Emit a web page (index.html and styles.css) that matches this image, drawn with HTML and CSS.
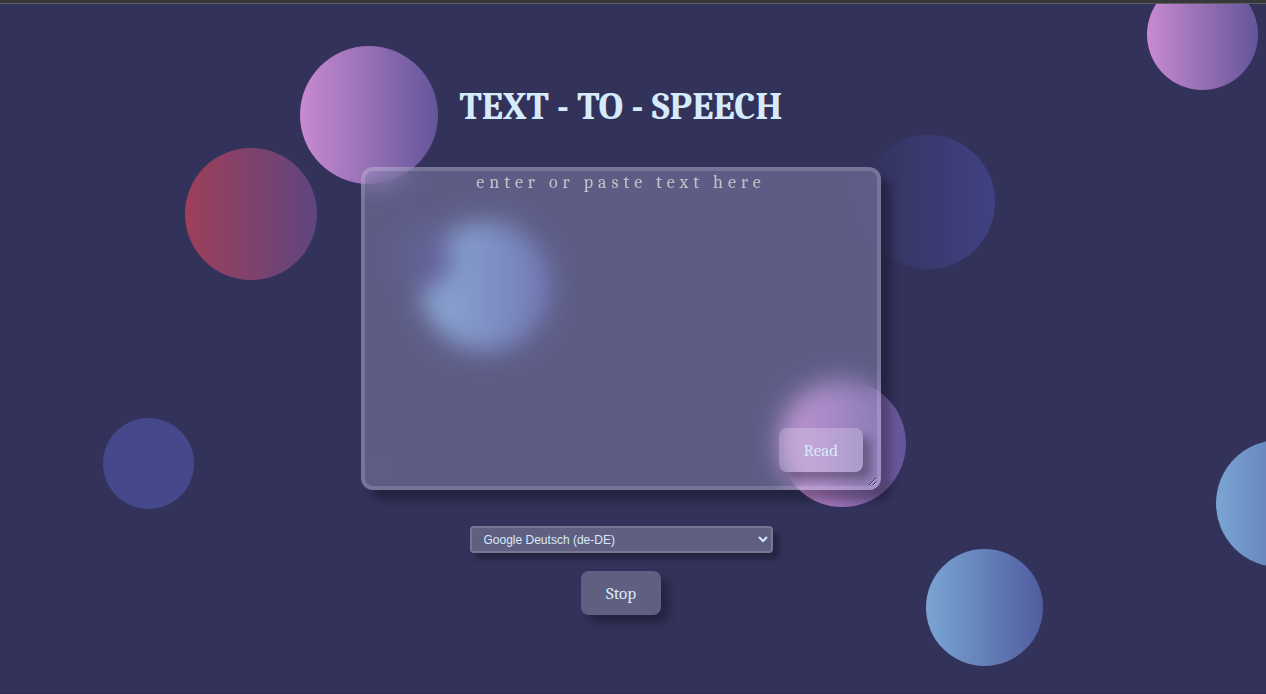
FILE: index.html
```html
<!DOCTYPE html>
<html lang="en">
<head>
<meta charset="utf-8">
<meta name="viewport" content="width=device-width, initial-scale=1">
<title>Text to Speech</title>
<link rel="stylesheet" href="styles.css">
</head>
<body>
<div class="top-edge"></div>
<main class="stage">
  <div class="bubbles" aria-hidden="true">
    <span class="bubble pink b-top"></span>
    <span class="bubble red b-red"></span>
    <span class="bubble indigo b-side"></span>
    <span class="bubble solid b-solid"></span>
    <span class="bubble pink b-corner"></span>
    <span class="bubble pink b-read"></span>
    <span class="bubble blue b-edge"></span>
    <span class="bubble blue b-low"></span>
    <span class="bubble blue b-glass"></span>
    <span class="bubble indigo b-bite"></span>
  </div>
  <h1 class="title">TEXT - TO - SPEECH</h1>
  <div class="editor">
    <textarea class="text" aria-label="Text to read" placeholder="enter or paste text here"></textarea>
    <button class="btn read" type="button">Read</button>
  </div>
  <select class="voice" aria-label="Voice">
    <option>Google Deutsch (de-DE)</option>
  </select>
  <button class="btn" type="button">Stop</button>
</main>
</body>
</html>
```
FILE: styles.css
```css
* { box-sizing: border-box; }

body {
  margin: 0;
  min-height: 100vh;
  display: flex;
  flex-direction: column;
  background: #33325b;
  color: #d6ebfa;
  font-family: Cambria, "Noto Serif", "Liberation Serif", serif;
}

.top-edge {
  height: 4px;
  background: #38383b;
  border-bottom: 1px solid #5d5d64;
}

.stage {
  position: relative;
  flex: 1;
  display: flex;
  flex-direction: column;
  align-items: center;
  padding: 81px 24px 32px 0;
  overflow: hidden;
  border-bottom: 1px solid #2e2c50;
}

.bubbles { position: absolute; inset: 0; }
.bubble { position: absolute; border-radius: 50%; aspect-ratio: 1; }
.pink { background: linear-gradient(90deg, #c98ad0, #635599); }
.red { background: linear-gradient(90deg, #9e3f59, #5f4580); }
.blue { background: linear-gradient(90deg, #7aa5d3, #505c9f); }
.indigo { background: linear-gradient(90deg, #33325b, #404183); }
.solid { background: #45488b; }

.b-top { left: 300px; top: 42px; width: 138px; }
.b-red { left: 185px; top: 144px; width: 132px; }
.b-side { left: 861px; top: 131px; width: 134px; }
.b-solid { left: 103px; top: 414px; width: 91px; }
.b-corner { right: 8px; top: -25px; width: 111px; }
.b-read { left: 779px; top: 376px; width: 127px; }
.b-edge { right: -77px; top: 436px; width: 127px; }
.b-low { left: 926px; top: 545px; width: 117px; }
.b-glass { left: 421px; top: 217px; width: 130px; }
.b-bite { left: 388px; top: 222px; width: 64px; }

.title {
  position: relative;
  margin: 0 0 38px;
  font-size: 38px;
  line-height: 44px;
}

.editor {
  position: relative;
  width: 100%;
  max-width: 520px;
  margin-bottom: 36px;
}

.text {
  display: block;
  width: 100%;
  height: 323px;
  padding: 0;
  border: 4px solid rgba(255, 255, 255, 0.15);
  border-radius: 12px;
  outline: 0;
  background: rgba(185, 185, 223, 0.32);
  backdrop-filter: blur(12px);
  box-shadow: 10px 10px 10px rgba(0, 0, 0, 0.3);
  color: #d6ebfa;
  font-family: inherit;
  font-size: 18px;
  line-height: 24px;
  letter-spacing: 5px;
  text-align: center;
}
.text::placeholder { color: #c3c3c7; opacity: 1; }

.btn {
  position: relative;
  height: 44px;
  padding: 0 25px;
  border: 0;
  border-radius: 8px;
  background: rgba(245, 245, 255, 0.23);
  box-shadow: 8px 8px 10px rgba(0, 0, 0, 0.3);
  color: #d6ebfa;
  font-family: inherit;
  font-size: 17px;
}

.read { position: absolute; right: 18px; bottom: 18px; }

.voice {
  position: relative;
  width: 303px;
  height: 27px;
  margin-bottom: 18px;
  padding: 0 8px;
  border: 2px solid rgba(255, 255, 255, 0.15);
  border-radius: 4px;
  background: rgba(245, 245, 255, 0.23);
  box-shadow: 6px 6px 6px rgba(0, 0, 0, 0.3);
  color: #d6ebfa;
  font-family: "Liberation Sans", Arial, sans-serif;
  font-size: 12px;
}
.voice option { color: #34325c; }
```
